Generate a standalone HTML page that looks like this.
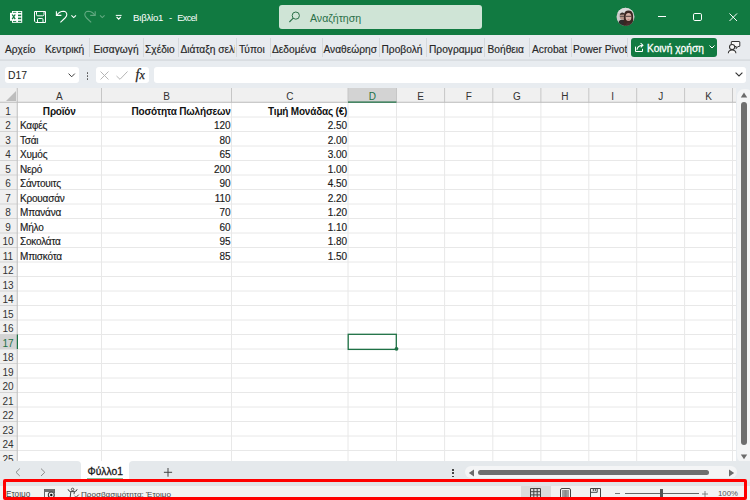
<!DOCTYPE html>
<html><head><meta charset="utf-8">
<style>
*{margin:0;padding:0;box-sizing:border-box}
html,body{width:750px;height:500px;overflow:hidden;background:#E8ECF0;font-family:"Liberation Sans",sans-serif;}
.a{position:absolute}
.t{position:absolute;white-space:nowrap;line-height:1}
#title{left:0;top:0;width:750px;height:35px;background:#117A41}
#ribbon{left:0;top:35px;width:750px;height:25px;background:#E8EBEF;border-bottom:1px solid #DCE0E4}
.tab{position:absolute;top:45px;font-size:10.2px;color:#262626;white-space:nowrap;line-height:1;-webkit-text-stroke:0.15px #262626}
.sep{position:absolute;top:38px;width:1px;height:19px;background:#D5D9DD}
#fbar{left:0;top:60px;width:750px;height:28px;background:#E8EBEF}
.cell{position:absolute;font-size:10px;color:#1a1a1a;white-space:nowrap;line-height:1;-webkit-text-stroke:0.15px #1a1a1a}
.b{font-weight:bold;color:#111;letter-spacing:-0.2px;-webkit-text-stroke:0}
.rn{position:absolute;font-size:10px;color:#333;width:17px;text-align:center;line-height:1}
.ch{position:absolute;top:92px;font-size:10px;color:#333;text-align:center;line-height:1}
</style></head><body>
<!-- TITLE BAR -->
<div id="title" class="a">
  <!-- excel icon -->
  <svg class="a" style="left:0;top:0" width="130" height="35" viewBox="0 0 130 35">
    <rect x="12" y="11" width="10.2" height="11.8" fill="#fff"/>
    <g fill="#117A41">
      <rect x="13" y="11.9" width="3.2" height="1" /><rect x="18" y="11.9" width="3.2" height="1"/>
      <rect x="18" y="14.6" width="3.2" height="1.6"/><rect x="18" y="17.6" width="3.2" height="1.6"/>
      <rect x="13" y="20.8" width="3.2" height="1.1"/><rect x="18" y="20.8" width="3.2" height="1.1"/>
    </g>
    <rect x="10" y="12.8" width="6.2" height="8" fill="#fff"/>
    <path d="M12.2 14.5 L15.2 19.1 M15.2 14.5 L12.2 19.1" stroke="#117A41" stroke-width="1.3"/>
    <!-- save -->
    <path d="M34.5 11.5 H45.5 V22.5 H35.8 L34.5 21.2 Z" fill="none" stroke="#fff" stroke-width="1"/>
    <path d="M36.5 11.5 V14.5 Q36.5 15.8 37.8 15.8 H42.7 Q44 15.8 44 14.5 V11.5" fill="none" stroke="#fff" stroke-width="1"/>
    <path d="M37.5 22.5 V19.6 Q37.5 18.5 38.6 18.5 H41.9 Q43 18.5 43 19.6 V22.5" fill="none" stroke="#fff" stroke-width="1"/>
    <!-- undo -->
    <path d="M56.4 11.2 V15.4 H61.4" fill="none" stroke="#fff" stroke-width="1.1"/>
    <path d="M57 15 C58.5 12.5 60.5 11.2 63.4 11.2 C65.5 11.3 66.8 12.8 66.8 14.8 C66.8 16 66 17 65 18 L60.4 22.4" fill="none" stroke="#fff" stroke-width="1.1"/>
    <path d="M71.4 15.4 L73.7 17.6 L76 15.4" fill="none" stroke="#fff" stroke-width="1.1"/>
    <!-- redo -->
    <path d="M95.2 11.2 V15.4 H90.2" fill="none" stroke="#63A981" stroke-width="1.1"/>
    <path d="M94.6 15 C93.1 12.5 91.1 11.2 88.2 11.2 C86.1 11.3 84.8 12.8 84.8 14.8 C84.8 16 85.6 17 86.6 18 L91.2 22.4" fill="none" stroke="#63A981" stroke-width="1.1"/>
    <path d="M100 15.4 L102.3 17.6 L104.6 15.4" fill="none" stroke="#63A981" stroke-width="1.1"/>
    <!-- customize -->
    <path d="M115.8 15.4 H121.6" stroke="#fff" stroke-width="1"/>
    <path d="M116.6 17 L118.7 19.1 L120.8 17" fill="none" stroke="#fff" stroke-width="1.1"/>
  </svg>
  <div class="t" style="left:133px;top:12.5px;font-size:9.6px;color:#fff;letter-spacing:-0.2px">Βιβλίο1</div><div class="t" style="left:169px;top:12.5px;font-size:9.6px;color:#fff">-</div><div class="t" style="left:177.3px;top:14.2px;font-size:9.2px;color:#fff;letter-spacing:-0.6px">Excel</div>
  <!-- search -->
  <div class="a" style="left:279px;top:5px;width:203px;height:24px;background:#CFE4D6;border-radius:3px"></div>
  <svg class="a" style="left:288px;top:10px" width="13" height="13" viewBox="0 0 13 13"><circle cx="7.8" cy="5.6" r="3.6" fill="none" stroke="#2B7049" stroke-width="1"/><path d="M5.2 8.2 L1.4 12" stroke="#2B7049" stroke-width="1.1"/></svg>
  <div class="t" style="left:310px;top:12.5px;font-size:10.6px;color:#2B7049">Αναζήτηση</div>
  <!-- avatar -->
  <svg class="a" style="left:616px;top:7px" width="19" height="19" viewBox="0 0 19 19">
    <defs><clipPath id="av"><circle cx="9.5" cy="9.8" r="9"/></clipPath></defs>
    <g clip-path="url(#av)">
      <rect width="19" height="19" fill="#CDCBCB"/>
      <rect x="0" y="0" width="19" height="6" fill="#DADADA"/>
      <path d="M2 19 L3 14 Q5 12 8 13 L9 19 Z" fill="#2E2B2B"/>
      <ellipse cx="6.4" cy="9.6" rx="2.6" ry="3.2" fill="#B49488"/>
      <path d="M3.6 8.5 Q4 5.6 6.6 5.6 Q9 5.6 9.2 8.2 L8.5 7.6 L4.4 7.8 Z" fill="#3A302C"/>
      <path d="M3.8 9.4 H9" stroke="#3a3a3a" stroke-width="0.7"/>
      <path d="M7.5 19 L8 8 Q8.5 3.6 12.5 3.6 Q16.5 3.6 17 8 L17.5 19 Z" fill="#3B2722"/>
      <ellipse cx="12.5" cy="10" rx="2.9" ry="3.9" fill="#D6B1A5"/>
      <path d="M9.6 9.3 H15.4" stroke="#2b2020" stroke-width="0.8"/>
      <path d="M11.6 12.8 H13.4" stroke="#A05050" stroke-width="0.6"/>
      <path d="M9.5 19 Q10 15.5 12.5 15.2 Q15 15.5 15.5 19 Z" fill="#4A2C2C"/>
    </g>
  </svg>
  <!-- window controls -->
  <div class="a" style="left:657.5px;top:16px;width:8px;height:1px;background:#fff"></div>
  <div class="a" style="left:693px;top:12.8px;width:8.8px;height:8.3px;border:1px solid #fff;border-radius:1.8px"></div>
  <svg class="a" style="left:729px;top:12.8px" width="8.5" height="8.5" viewBox="0 0 9 9"><path d="M0.5 0.5 L8.5 8.5 M8.5 0.5 L0.5 8.5" stroke="#fff" stroke-width="1.05"/></svg>
</div>

<!-- RIBBON TABS -->
<div id="ribbon" class="a"></div>
<div class="tab" style="left:5px">Αρχείο</div>
<div class="tab" style="left:45px">Κεντρική</div>
<div class="sep" style="left:89px"></div>
<div class="tab" style="left:93.5px">Εισαγωγή</div>
<div class="sep" style="left:142.5px"></div>
<div class="tab" style="left:145px">Σχέδιο</div>
<div class="sep" style="left:178px"></div>
<div class="a" style="left:180px;top:40px;width:55px;height:18px;overflow:hidden"><div class="tab" style="left:0.5px;top:5px">Διάταξη σελίδας</div></div>
<div class="sep" style="left:236px"></div>
<div class="tab" style="left:239px">Τύποι</div>
<div class="sep" style="left:269.5px"></div>
<div class="tab" style="left:272px">Δεδομένα</div>
<div class="sep" style="left:321.5px"></div>
<div class="a" style="left:323px;top:40px;width:54px;height:18px;overflow:hidden"><div class="tab" style="left:0.5px;top:5px">Αναθεώρηση</div></div>
<div class="sep" style="left:378.5px"></div>
<div class="tab" style="left:381.5px">Προβολή</div>
<div class="sep" style="left:426px"></div>
<div class="a" style="left:428.5px;top:40px;width:54px;height:18px;overflow:hidden"><div class="tab" style="left:0.5px;top:5px">Προγραμματιστής</div></div>
<div class="sep" style="left:484px"></div>
<div class="tab" style="left:487.5px">Βοήθεια</div>
<div class="sep" style="left:528.5px"></div>
<div class="tab" style="left:532px">Acrobat</div>
<div class="sep" style="left:570.5px"></div>
<div class="tab" style="left:573px">Power Pivot</div>
<div class="sep" style="left:627px"></div>
<!-- share button -->
<div class="a" style="left:631px;top:38px;width:86px;height:19px;background:#117A41;border-radius:3px"></div>
<svg class="a" style="left:630px;top:38px" width="16" height="18" viewBox="0 0 16 18"><path d="M5.5 8.6 V13.5 H12.5 V10.8" fill="none" stroke="#fff" stroke-width="1"/><path d="M7 11.8 C7.2 9.2 9 7.6 12.6 7.2" fill="none" stroke="#fff" stroke-width="1.1"/><path d="M10.6 5.2 L12.9 7.2 L10.8 9.3" fill="none" stroke="#fff" stroke-width="1.1"/></svg>
<div class="t" style="left:647px;top:44px;font-size:10.2px;color:#fff;-webkit-text-stroke:0.3px #fff">Κοινή χρήση</div>
<svg class="a" style="left:709px;top:45px" width="6" height="4" viewBox="0 0 6 4"><path d="M0.5 0.5 L3 3 L5.5 0.5" fill="none" stroke="#fff" stroke-width="1"/></svg>
<!-- feedback icon -->
<svg class="a" style="left:722px;top:36px" width="24" height="22" viewBox="0 0 24 22">
  <path d="M9.3 8.5 V6 Q9.3 5.5 9.8 5.5 H17.3 Q17.8 5.5 17.8 6 V10 Q17.8 10.5 17.3 10.5 H15.8 L14.2 12.6 V10.5 H12.5" fill="#F7F7F7" stroke="#333" stroke-width="1"/>
  <circle cx="10.1" cy="11" r="2.6" fill="#F7F7F7" stroke="#333" stroke-width="1.05"/>
  <path d="M6.3 17.2 C6.5 15 8 13.9 10.1 13.9 C12.2 13.9 13.7 15 13.9 17.2" fill="#F7F7F7" stroke="#333" stroke-width="1.05"/>
</svg>

<!-- FORMULA BAR -->
<div class="a" style="left:0;top:60px;width:750px;height:1px;background:#D9DDE1"></div>
<div class="a" style="left:5px;top:67px;width:74px;height:16px;background:#fff;border-radius:3px"></div>
<div class="t" style="left:8px;top:71px;font-size:10.4px;color:#222">D17</div>
<svg class="a" style="left:67.5px;top:72.5px" width="8" height="5" viewBox="0 0 8 5"><path d="M0.6 0.6 L3.7 3.8 L6.8 0.6" fill="none" stroke="#333" stroke-width="0.95"/></svg>
<div class="a" style="left:87px;top:72.3px;width:1.3px;height:1.3px;background:#555;border-radius:0.5px"></div>
<div class="a" style="left:87px;top:75.3px;width:1.3px;height:1.3px;background:#555;border-radius:0.5px"></div>
<div class="a" style="left:87px;top:78.3px;width:1.3px;height:1.3px;background:#555;border-radius:0.5px"></div>
<div class="a" style="left:96px;top:67px;width:53px;height:16px;background:#fff;border-radius:3px"></div>
<svg class="a" style="left:100px;top:71px" width="9" height="9" viewBox="0 0 9 9"><path d="M0.5 0.5 L8.5 8.5 M8.5 0.5 L0.5 8.5" stroke="#B5B5B5" stroke-width="1"/></svg>
<svg class="a" style="left:116px;top:71px" width="12" height="9" viewBox="0 0 12 9"><path d="M0.5 5 L4 8.3 L11.5 0.5" fill="none" stroke="#B5B5B5" stroke-width="1"/></svg>
<div class="t" style="left:135.5px;top:67.5px;font-family:'Liberation Serif',serif;font-style:italic;font-size:14px;color:#222;letter-spacing:0px;-webkit-text-stroke:0.25px #222">f<span style="font-size:12px">x</span></div>
<div class="a" style="left:153.5px;top:66.5px;width:592px;height:16.5px;background:#fff;border-radius:3px"></div>
<svg class="a" style="left:734.5px;top:72px" width="8" height="5" viewBox="0 0 8 5"><path d="M0.6 0.6 L4 4 L7.4 0.6" fill="none" stroke="#333" stroke-width="1.1"/></svg>

<!-- GRID AREA -->
<div class="a" style="left:0;top:88px;width:736px;height:373px;background:#fff"></div>
<div class="a" style="left:0;top:88px;width:736px;height:14.5px;background:#F0F0F0"></div>
<div class="a" style="left:0;top:88px;width:17px;height:373px;background:#F0F0F0"></div>
<!--GRIDSTART-->
<svg class="a" style="left:0;top:0" width="750" height="500" viewBox="0 0 750 500">
<defs><clipPath id="gc"><rect x="0" y="88" width="736" height="373"/></clipPath></defs><g clip-path="url(#gc)">
<rect x="348" y="88" width="48.5" height="14.5" fill="#D3D3D3"/>
<rect x="0" y="334.5" width="17" height="14.5" fill="#D3D3D3"/>
<line x1="17" y1="117.00" x2="736" y2="117.00" stroke="#E8E8E8" stroke-width="1"/>
<line x1="0" y1="117.00" x2="17" y2="117.00" stroke="#D4D4D4" stroke-width="1"/>
<line x1="17" y1="131.50" x2="736" y2="131.50" stroke="#E8E8E8" stroke-width="1"/>
<line x1="0" y1="131.50" x2="17" y2="131.50" stroke="#D4D4D4" stroke-width="1"/>
<line x1="17" y1="146.00" x2="736" y2="146.00" stroke="#E8E8E8" stroke-width="1"/>
<line x1="0" y1="146.00" x2="17" y2="146.00" stroke="#D4D4D4" stroke-width="1"/>
<line x1="17" y1="160.50" x2="736" y2="160.50" stroke="#E8E8E8" stroke-width="1"/>
<line x1="0" y1="160.50" x2="17" y2="160.50" stroke="#D4D4D4" stroke-width="1"/>
<line x1="17" y1="175.00" x2="736" y2="175.00" stroke="#E8E8E8" stroke-width="1"/>
<line x1="0" y1="175.00" x2="17" y2="175.00" stroke="#D4D4D4" stroke-width="1"/>
<line x1="17" y1="189.50" x2="736" y2="189.50" stroke="#E8E8E8" stroke-width="1"/>
<line x1="0" y1="189.50" x2="17" y2="189.50" stroke="#D4D4D4" stroke-width="1"/>
<line x1="17" y1="204.00" x2="736" y2="204.00" stroke="#E8E8E8" stroke-width="1"/>
<line x1="0" y1="204.00" x2="17" y2="204.00" stroke="#D4D4D4" stroke-width="1"/>
<line x1="17" y1="218.50" x2="736" y2="218.50" stroke="#E8E8E8" stroke-width="1"/>
<line x1="0" y1="218.50" x2="17" y2="218.50" stroke="#D4D4D4" stroke-width="1"/>
<line x1="17" y1="233.00" x2="736" y2="233.00" stroke="#E8E8E8" stroke-width="1"/>
<line x1="0" y1="233.00" x2="17" y2="233.00" stroke="#D4D4D4" stroke-width="1"/>
<line x1="17" y1="247.50" x2="736" y2="247.50" stroke="#E8E8E8" stroke-width="1"/>
<line x1="0" y1="247.50" x2="17" y2="247.50" stroke="#D4D4D4" stroke-width="1"/>
<line x1="17" y1="262.00" x2="736" y2="262.00" stroke="#E8E8E8" stroke-width="1"/>
<line x1="0" y1="262.00" x2="17" y2="262.00" stroke="#D4D4D4" stroke-width="1"/>
<line x1="17" y1="276.50" x2="736" y2="276.50" stroke="#E8E8E8" stroke-width="1"/>
<line x1="0" y1="276.50" x2="17" y2="276.50" stroke="#D4D4D4" stroke-width="1"/>
<line x1="17" y1="291.00" x2="736" y2="291.00" stroke="#E8E8E8" stroke-width="1"/>
<line x1="0" y1="291.00" x2="17" y2="291.00" stroke="#D4D4D4" stroke-width="1"/>
<line x1="17" y1="305.50" x2="736" y2="305.50" stroke="#E8E8E8" stroke-width="1"/>
<line x1="0" y1="305.50" x2="17" y2="305.50" stroke="#D4D4D4" stroke-width="1"/>
<line x1="17" y1="320.00" x2="736" y2="320.00" stroke="#E8E8E8" stroke-width="1"/>
<line x1="0" y1="320.00" x2="17" y2="320.00" stroke="#D4D4D4" stroke-width="1"/>
<line x1="17" y1="334.50" x2="736" y2="334.50" stroke="#E8E8E8" stroke-width="1"/>
<line x1="0" y1="334.50" x2="17" y2="334.50" stroke="#D4D4D4" stroke-width="1"/>
<line x1="17" y1="349.00" x2="736" y2="349.00" stroke="#E8E8E8" stroke-width="1"/>
<line x1="0" y1="349.00" x2="17" y2="349.00" stroke="#D4D4D4" stroke-width="1"/>
<line x1="17" y1="363.50" x2="736" y2="363.50" stroke="#E8E8E8" stroke-width="1"/>
<line x1="0" y1="363.50" x2="17" y2="363.50" stroke="#D4D4D4" stroke-width="1"/>
<line x1="17" y1="378.00" x2="736" y2="378.00" stroke="#E8E8E8" stroke-width="1"/>
<line x1="0" y1="378.00" x2="17" y2="378.00" stroke="#D4D4D4" stroke-width="1"/>
<line x1="17" y1="392.50" x2="736" y2="392.50" stroke="#E8E8E8" stroke-width="1"/>
<line x1="0" y1="392.50" x2="17" y2="392.50" stroke="#D4D4D4" stroke-width="1"/>
<line x1="17" y1="407.00" x2="736" y2="407.00" stroke="#E8E8E8" stroke-width="1"/>
<line x1="0" y1="407.00" x2="17" y2="407.00" stroke="#D4D4D4" stroke-width="1"/>
<line x1="17" y1="421.50" x2="736" y2="421.50" stroke="#E8E8E8" stroke-width="1"/>
<line x1="0" y1="421.50" x2="17" y2="421.50" stroke="#D4D4D4" stroke-width="1"/>
<line x1="17" y1="436.00" x2="736" y2="436.00" stroke="#E8E8E8" stroke-width="1"/>
<line x1="0" y1="436.00" x2="17" y2="436.00" stroke="#D4D4D4" stroke-width="1"/>
<line x1="17" y1="450.50" x2="736" y2="450.50" stroke="#E8E8E8" stroke-width="1"/>
<line x1="0" y1="450.50" x2="17" y2="450.50" stroke="#D4D4D4" stroke-width="1"/>
<line x1="17" y1="465.00" x2="736" y2="465.00" stroke="#E8E8E8" stroke-width="1"/>
<line x1="0" y1="465.00" x2="17" y2="465.00" stroke="#D4D4D4" stroke-width="1"/>
<line x1="101.5" y1="102.5" x2="101.5" y2="461" stroke="#E8E8E8" stroke-width="1"/>
<line x1="101.5" y1="88" x2="101.5" y2="102.5" stroke="#C6C6C6" stroke-width="1"/>
<line x1="231.5" y1="102.5" x2="231.5" y2="461" stroke="#E8E8E8" stroke-width="1"/>
<line x1="231.5" y1="88" x2="231.5" y2="102.5" stroke="#C6C6C6" stroke-width="1"/>
<line x1="348" y1="102.5" x2="348" y2="461" stroke="#E8E8E8" stroke-width="1"/>
<line x1="348" y1="88" x2="348" y2="102.5" stroke="#C6C6C6" stroke-width="1"/>
<line x1="396.5" y1="102.5" x2="396.5" y2="461" stroke="#E8E8E8" stroke-width="1"/>
<line x1="396.5" y1="88" x2="396.5" y2="102.5" stroke="#C6C6C6" stroke-width="1"/>
<line x1="444.6" y1="102.5" x2="444.6" y2="461" stroke="#E8E8E8" stroke-width="1"/>
<line x1="444.6" y1="88" x2="444.6" y2="102.5" stroke="#C6C6C6" stroke-width="1"/>
<line x1="492.8" y1="102.5" x2="492.8" y2="461" stroke="#E8E8E8" stroke-width="1"/>
<line x1="492.8" y1="88" x2="492.8" y2="102.5" stroke="#C6C6C6" stroke-width="1"/>
<line x1="540.9" y1="102.5" x2="540.9" y2="461" stroke="#E8E8E8" stroke-width="1"/>
<line x1="540.9" y1="88" x2="540.9" y2="102.5" stroke="#C6C6C6" stroke-width="1"/>
<line x1="588.8" y1="102.5" x2="588.8" y2="461" stroke="#E8E8E8" stroke-width="1"/>
<line x1="588.8" y1="88" x2="588.8" y2="102.5" stroke="#C6C6C6" stroke-width="1"/>
<line x1="636.7" y1="102.5" x2="636.7" y2="461" stroke="#E8E8E8" stroke-width="1"/>
<line x1="636.7" y1="88" x2="636.7" y2="102.5" stroke="#C6C6C6" stroke-width="1"/>
<line x1="684.6" y1="102.5" x2="684.6" y2="461" stroke="#E8E8E8" stroke-width="1"/>
<line x1="684.6" y1="88" x2="684.6" y2="102.5" stroke="#C6C6C6" stroke-width="1"/>
<line x1="732.5" y1="102.5" x2="732.5" y2="461" stroke="#E8E8E8" stroke-width="1"/>
<line x1="732.5" y1="88" x2="732.5" y2="102.5" stroke="#C6C6C6" stroke-width="1"/>
<line x1="0" y1="102.25" x2="736" y2="102.25" stroke="#BDBDBD" stroke-width="1"/>
<line x1="17.25" y1="88" x2="17.25" y2="461" stroke="#BDBDBD" stroke-width="1"/>
<line x1="348" y1="102.2" x2="396.5" y2="102.2" stroke="#1E7145" stroke-width="1.3"/>
<line x1="17.4" y1="334.5" x2="17.4" y2="349.0" stroke="#1E7145" stroke-width="1.2"/>
<path d="M16 91 L16 101 L6 101 Z" fill="#BDBDBD"/>
<rect x="348.2" y="334.3" width="48.1" height="15.1" fill="none" stroke="#1E7145" stroke-width="1.3"/>
<circle cx="396.5" cy="348.8" r="1.9" fill="#1E7145"/>
</g></svg>
<div class="ch" style="left:17px;width:84.5px;color:#333">A</div>
<div class="ch" style="left:101.5px;width:130.0px;color:#333">B</div>
<div class="ch" style="left:231.5px;width:116.5px;color:#333">C</div>
<div class="ch" style="left:348px;width:48.5px;color:#1E7145">D</div>
<div class="ch" style="left:396.5px;width:48.1px;color:#333">E</div>
<div class="ch" style="left:444.6px;width:48.2px;color:#333">F</div>
<div class="ch" style="left:492.8px;width:48.1px;color:#333">G</div>
<div class="ch" style="left:540.9px;width:47.9px;color:#333">H</div>
<div class="ch" style="left:588.8px;width:47.9px;color:#333">I</div>
<div class="ch" style="left:636.7px;width:47.9px;color:#333">J</div>
<div class="ch" style="left:684.6px;width:47.9px;color:#333">K</div>
<div class="rn" style="left:-0.5px;top:106.70px;color:#333">1</div>
<div class="rn" style="left:-0.5px;top:121.20px;color:#333">2</div>
<div class="rn" style="left:-0.5px;top:135.70px;color:#333">3</div>
<div class="rn" style="left:-0.5px;top:150.20px;color:#333">4</div>
<div class="rn" style="left:-0.5px;top:164.70px;color:#333">5</div>
<div class="rn" style="left:-0.5px;top:179.20px;color:#333">6</div>
<div class="rn" style="left:-0.5px;top:193.70px;color:#333">7</div>
<div class="rn" style="left:-0.5px;top:208.20px;color:#333">8</div>
<div class="rn" style="left:-0.5px;top:222.70px;color:#333">9</div>
<div class="rn" style="left:-0.5px;top:237.20px;color:#333">10</div>
<div class="rn" style="left:-0.5px;top:251.70px;color:#333">11</div>
<div class="rn" style="left:-0.5px;top:266.20px;color:#333">12</div>
<div class="rn" style="left:-0.5px;top:280.70px;color:#333">13</div>
<div class="rn" style="left:-0.5px;top:295.20px;color:#333">14</div>
<div class="rn" style="left:-0.5px;top:309.70px;color:#333">15</div>
<div class="rn" style="left:-0.5px;top:324.20px;color:#333">16</div>
<div class="rn" style="left:-0.5px;top:338.70px;color:#1E7145">17</div>
<div class="rn" style="left:-0.5px;top:353.20px;color:#333">18</div>
<div class="rn" style="left:-0.5px;top:367.70px;color:#333">19</div>
<div class="rn" style="left:-0.5px;top:382.20px;color:#333">20</div>
<div class="rn" style="left:-0.5px;top:396.70px;color:#333">21</div>
<div class="rn" style="left:-0.5px;top:411.20px;color:#333">22</div>
<div class="rn" style="left:-0.5px;top:425.70px;color:#333">23</div>
<div class="rn" style="left:-0.5px;top:440.20px;color:#333">24</div>
<div class="rn" style="left:-0.5px;top:454.70px;color:#333">25</div>
<div class="cell b" style="left:17px;width:84.5px;text-align:center;top:106.50px">Προϊόν</div>
<div class="cell b" style="left:101.5px;width:129.2px;text-align:right;top:106.50px">Ποσότητα Πωλήσεων</div>
<div class="cell b" style="left:231.5px;width:115.7px;text-align:right;top:106.50px">Τιμή Μονάδας (€)</div>
<div class="cell" style="left:20px;top:121.10px;letter-spacing:-0.2px">Καφές</div>
<div class="cell" style="left:101.5px;width:129.2px;text-align:right;top:121.10px">120</div>
<div class="cell" style="left:231.5px;width:115.7px;text-align:right;top:121.10px">2.50</div>
<div class="cell" style="left:20px;top:135.60px;letter-spacing:-0.2px">Τσάι</div>
<div class="cell" style="left:101.5px;width:129.2px;text-align:right;top:135.60px">80</div>
<div class="cell" style="left:231.5px;width:115.7px;text-align:right;top:135.60px">2.00</div>
<div class="cell" style="left:20px;top:150.10px;letter-spacing:-0.2px">Χυμός</div>
<div class="cell" style="left:101.5px;width:129.2px;text-align:right;top:150.10px">65</div>
<div class="cell" style="left:231.5px;width:115.7px;text-align:right;top:150.10px">3.00</div>
<div class="cell" style="left:20px;top:164.60px;letter-spacing:-0.2px">Νερό</div>
<div class="cell" style="left:101.5px;width:129.2px;text-align:right;top:164.60px">200</div>
<div class="cell" style="left:231.5px;width:115.7px;text-align:right;top:164.60px">1.00</div>
<div class="cell" style="left:20px;top:179.10px;letter-spacing:-0.2px">Σάντουιτς</div>
<div class="cell" style="left:101.5px;width:129.2px;text-align:right;top:179.10px">90</div>
<div class="cell" style="left:231.5px;width:115.7px;text-align:right;top:179.10px">4.50</div>
<div class="cell" style="left:20px;top:193.60px;letter-spacing:-0.2px">Κρουασάν</div>
<div class="cell" style="left:101.5px;width:129.2px;text-align:right;top:193.60px">110</div>
<div class="cell" style="left:231.5px;width:115.7px;text-align:right;top:193.60px">2.20</div>
<div class="cell" style="left:20px;top:208.10px;letter-spacing:-0.2px">Μπανάνα</div>
<div class="cell" style="left:101.5px;width:129.2px;text-align:right;top:208.10px">70</div>
<div class="cell" style="left:231.5px;width:115.7px;text-align:right;top:208.10px">1.20</div>
<div class="cell" style="left:20px;top:222.60px;letter-spacing:-0.2px">Μήλο</div>
<div class="cell" style="left:101.5px;width:129.2px;text-align:right;top:222.60px">60</div>
<div class="cell" style="left:231.5px;width:115.7px;text-align:right;top:222.60px">1.10</div>
<div class="cell" style="left:20px;top:237.10px;letter-spacing:-0.2px">Σοκολάτα</div>
<div class="cell" style="left:101.5px;width:129.2px;text-align:right;top:237.10px">95</div>
<div class="cell" style="left:231.5px;width:115.7px;text-align:right;top:237.10px">1.80</div>
<div class="cell" style="left:20px;top:251.60px;letter-spacing:-0.2px">Μπισκότα</div>
<div class="cell" style="left:101.5px;width:129.2px;text-align:right;top:251.60px">85</div>
<div class="cell" style="left:231.5px;width:115.7px;text-align:right;top:251.60px">1.50</div>
<!--GRIDEND-->
<!-- VERTICAL SCROLLBAR -->
<div class="a" style="left:737px;top:89px;width:16px;height:374px;background:#F4F5F6;border-radius:7px"></div>
<svg class="a" style="left:740px;top:92px" width="8" height="6" viewBox="0 0 8 6"><path d="M0.8 5.5 L4 0.6 L7.2 5.5 Z" fill="#6B6B6B"/></svg>
<div class="a" style="left:741px;top:101.5px;width:6px;height:343px;background:#6E6E6E;border-radius:3px"></div>
<svg class="a" style="left:740px;top:453.5px" width="8" height="6" viewBox="0 0 8 6"><path d="M0.8 0.5 L4 5.2 L7.2 0.5 Z" fill="#6B6B6B"/></svg>

<!-- SHEET TAB BAR -->
<div class="a" style="left:0;top:461px;width:750px;height:25px;background:#E5E9EC"></div>
<div class="a" style="left:0;top:461px;width:750px;height:8px;background:#fff"></div>
<div class="a" style="left:80.8px;top:461px;width:48.5px;height:20px;background:#fff"></div>
<div class="a" style="left:0;top:461px;width:81px;height:20px;background:#E5E9EC;border-top-right-radius:4px"></div>
<div class="a" style="left:129.3px;top:461px;width:621px;height:20px;background:#E5E9EC;border-top-left-radius:4px"></div>
<svg class="a" style="left:15px;top:468px" width="6" height="9" viewBox="0 0 6 9"><path d="M4.8 0.6 L1 4.3 L4.8 8" fill="none" stroke="#8C8C8C" stroke-width="1"/></svg>
<svg class="a" style="left:39.5px;top:468px" width="6" height="9" viewBox="0 0 6 9"><path d="M1 0.6 L4.8 4.3 L1 8" fill="none" stroke="#8C8C8C" stroke-width="1"/></svg>
<div class="t" style="left:87.5px;top:466.5px;font-size:10.3px;color:#1a1a1a;-webkit-text-stroke:0.3px #1a1a1a">Φύλλο1</div>
<div class="a" style="left:87px;top:477.6px;width:36px;height:1.2px;background:#86C09C"></div>
<svg class="a" style="left:163px;top:467px" width="10" height="10" viewBox="0 0 10 10"><path d="M5 1 V9.7 M0.9 5.3 H9.1" stroke="#444" stroke-width="1"/></svg>
<div class="a" style="left:452px;top:469px;width:1.6px;height:1.6px;background:#444"></div>
<div class="a" style="left:452px;top:472.3px;width:1.6px;height:1.6px;background:#444"></div>
<div class="a" style="left:452px;top:475.6px;width:1.6px;height:1.6px;background:#444"></div>
<!-- horizontal scrollbar -->
<div class="a" style="left:465px;top:466px;width:272px;height:12px;background:#F4F5F6;border-radius:6px"></div>
<svg class="a" style="left:468px;top:469px" width="7" height="8" viewBox="0 0 7 8"><path d="M6 0.5 L0.8 4 L6 7.5 Z" fill="#6B6B6B"/></svg>
<div class="a" style="left:478px;top:469.5px;width:231px;height:5.8px;background:#6E6E6E;border-radius:3px"></div>
<svg class="a" style="left:728px;top:469px" width="7" height="8" viewBox="0 0 7 8"><path d="M1 0.5 L6.2 4 L1 7.5 Z" fill="#6B6B6B"/></svg>

<!-- STATUS BAR -->
<div class="a" style="left:0;top:482px;width:750px;height:4px;background:#E1E3E6"></div>
<div class="a" style="left:0;top:486px;width:750px;height:14px;background:#F3F3F3"></div>
<div class="t" style="left:6px;top:490.8px;font-size:8.2px;color:#444">Ετοιμο</div>
<svg class="a" style="left:40px;top:484px" width="42" height="16" viewBox="0 0 42 16">
  <rect x="4" y="5" width="11" height="3" fill="#6E6E6E"/>
  <path d="M4.5 5 V13" stroke="#666" stroke-width="1"/>
  <path d="M14.5 5 V9" stroke="#666" stroke-width="1"/>
  <circle cx="11.3" cy="11" r="3" fill="#F3F3F3" stroke="#3E3E3E" stroke-width="1.1"/>
  <circle cx="11.3" cy="11" r="1.2" fill="#111"/>
  <circle cx="32.6" cy="5.4" r="1.25" fill="none" stroke="#444" stroke-width="0.9"/>
  <path d="M28 5.2 Q28.6 7.4 30.6 7.6 H34.6 Q36.6 7.4 37.2 5.2" fill="none" stroke="#444" stroke-width="1"/>
  <path d="M30.8 7.6 L30.2 13.5 M34.4 7.6 L34 10.2" fill="none" stroke="#444" stroke-width="1"/>
  <path d="M34.6 12 L36 13.4 L38.8 10.6" fill="none" stroke="#444" stroke-width="1"/>
</svg>
<div class="t" style="left:81px;top:490.8px;font-size:8.1px;color:#444">Προσβασιμότητα: Έτοιμο</div>
<div class="a" style="left:521px;top:486px;width:29.5px;height:14px;background:#DCDCDC"></div>
<svg class="a" style="left:530px;top:488px" width="11" height="10" viewBox="0 0 11 10"><path d="M0.5 0.5 H10.5 V10 M0.5 0.5 V10 M0.5 3.7 H10.5 M0.5 6.9 H10.5 M3.8 0.5 V10 M7.2 0.5 V10" fill="none" stroke="#444" stroke-width="1"/></svg>
<svg class="a" style="left:560px;top:488px" width="11" height="10" viewBox="0 0 11 10"><rect x="0.5" y="0.5" width="10" height="10" rx="1.5" fill="none" stroke="#444" stroke-width="1"/><rect x="2" y="2" width="7" height="8" fill="#A0A0A0"/><rect x="4.5" y="2" width="2" height="8" fill="#8A8A8A"/></svg>
<svg class="a" style="left:590px;top:488px" width="11" height="10" viewBox="0 0 11 10"><path d="M0.5 10 V0.5 H10.5 V10" fill="none" stroke="#444" stroke-width="1"/><path d="M0.5 4.3 H7.2 V0.5 M3.3 0.5 V3 M5.3 0.5 V3" fill="none" stroke="#444" stroke-width="1"/></svg>
<div class="a" style="left:614.5px;top:493px;width:5.5px;height:1px;background:#777"></div>
<div class="a" style="left:624.5px;top:493px;width:74.5px;height:1px;background:#666"></div>
<div class="a" style="left:659.5px;top:489px;width:3.8px;height:8px;background:#555"></div>
<svg class="a" style="left:702px;top:490.5px" width="6" height="6" viewBox="0 0 6 6"><path d="M3 0 V6 M0 3 H6" stroke="#777" stroke-width="0.9"/></svg>
<div class="t" style="left:718px;top:490px;font-size:7.8px;color:#555">100%</div>

<!-- RED HIGHLIGHT -->
<div class="a" style="left:3px;top:479px;width:744px;height:20.6px;border:3px solid #FF0000;border-radius:2px"></div>
</body></html>
